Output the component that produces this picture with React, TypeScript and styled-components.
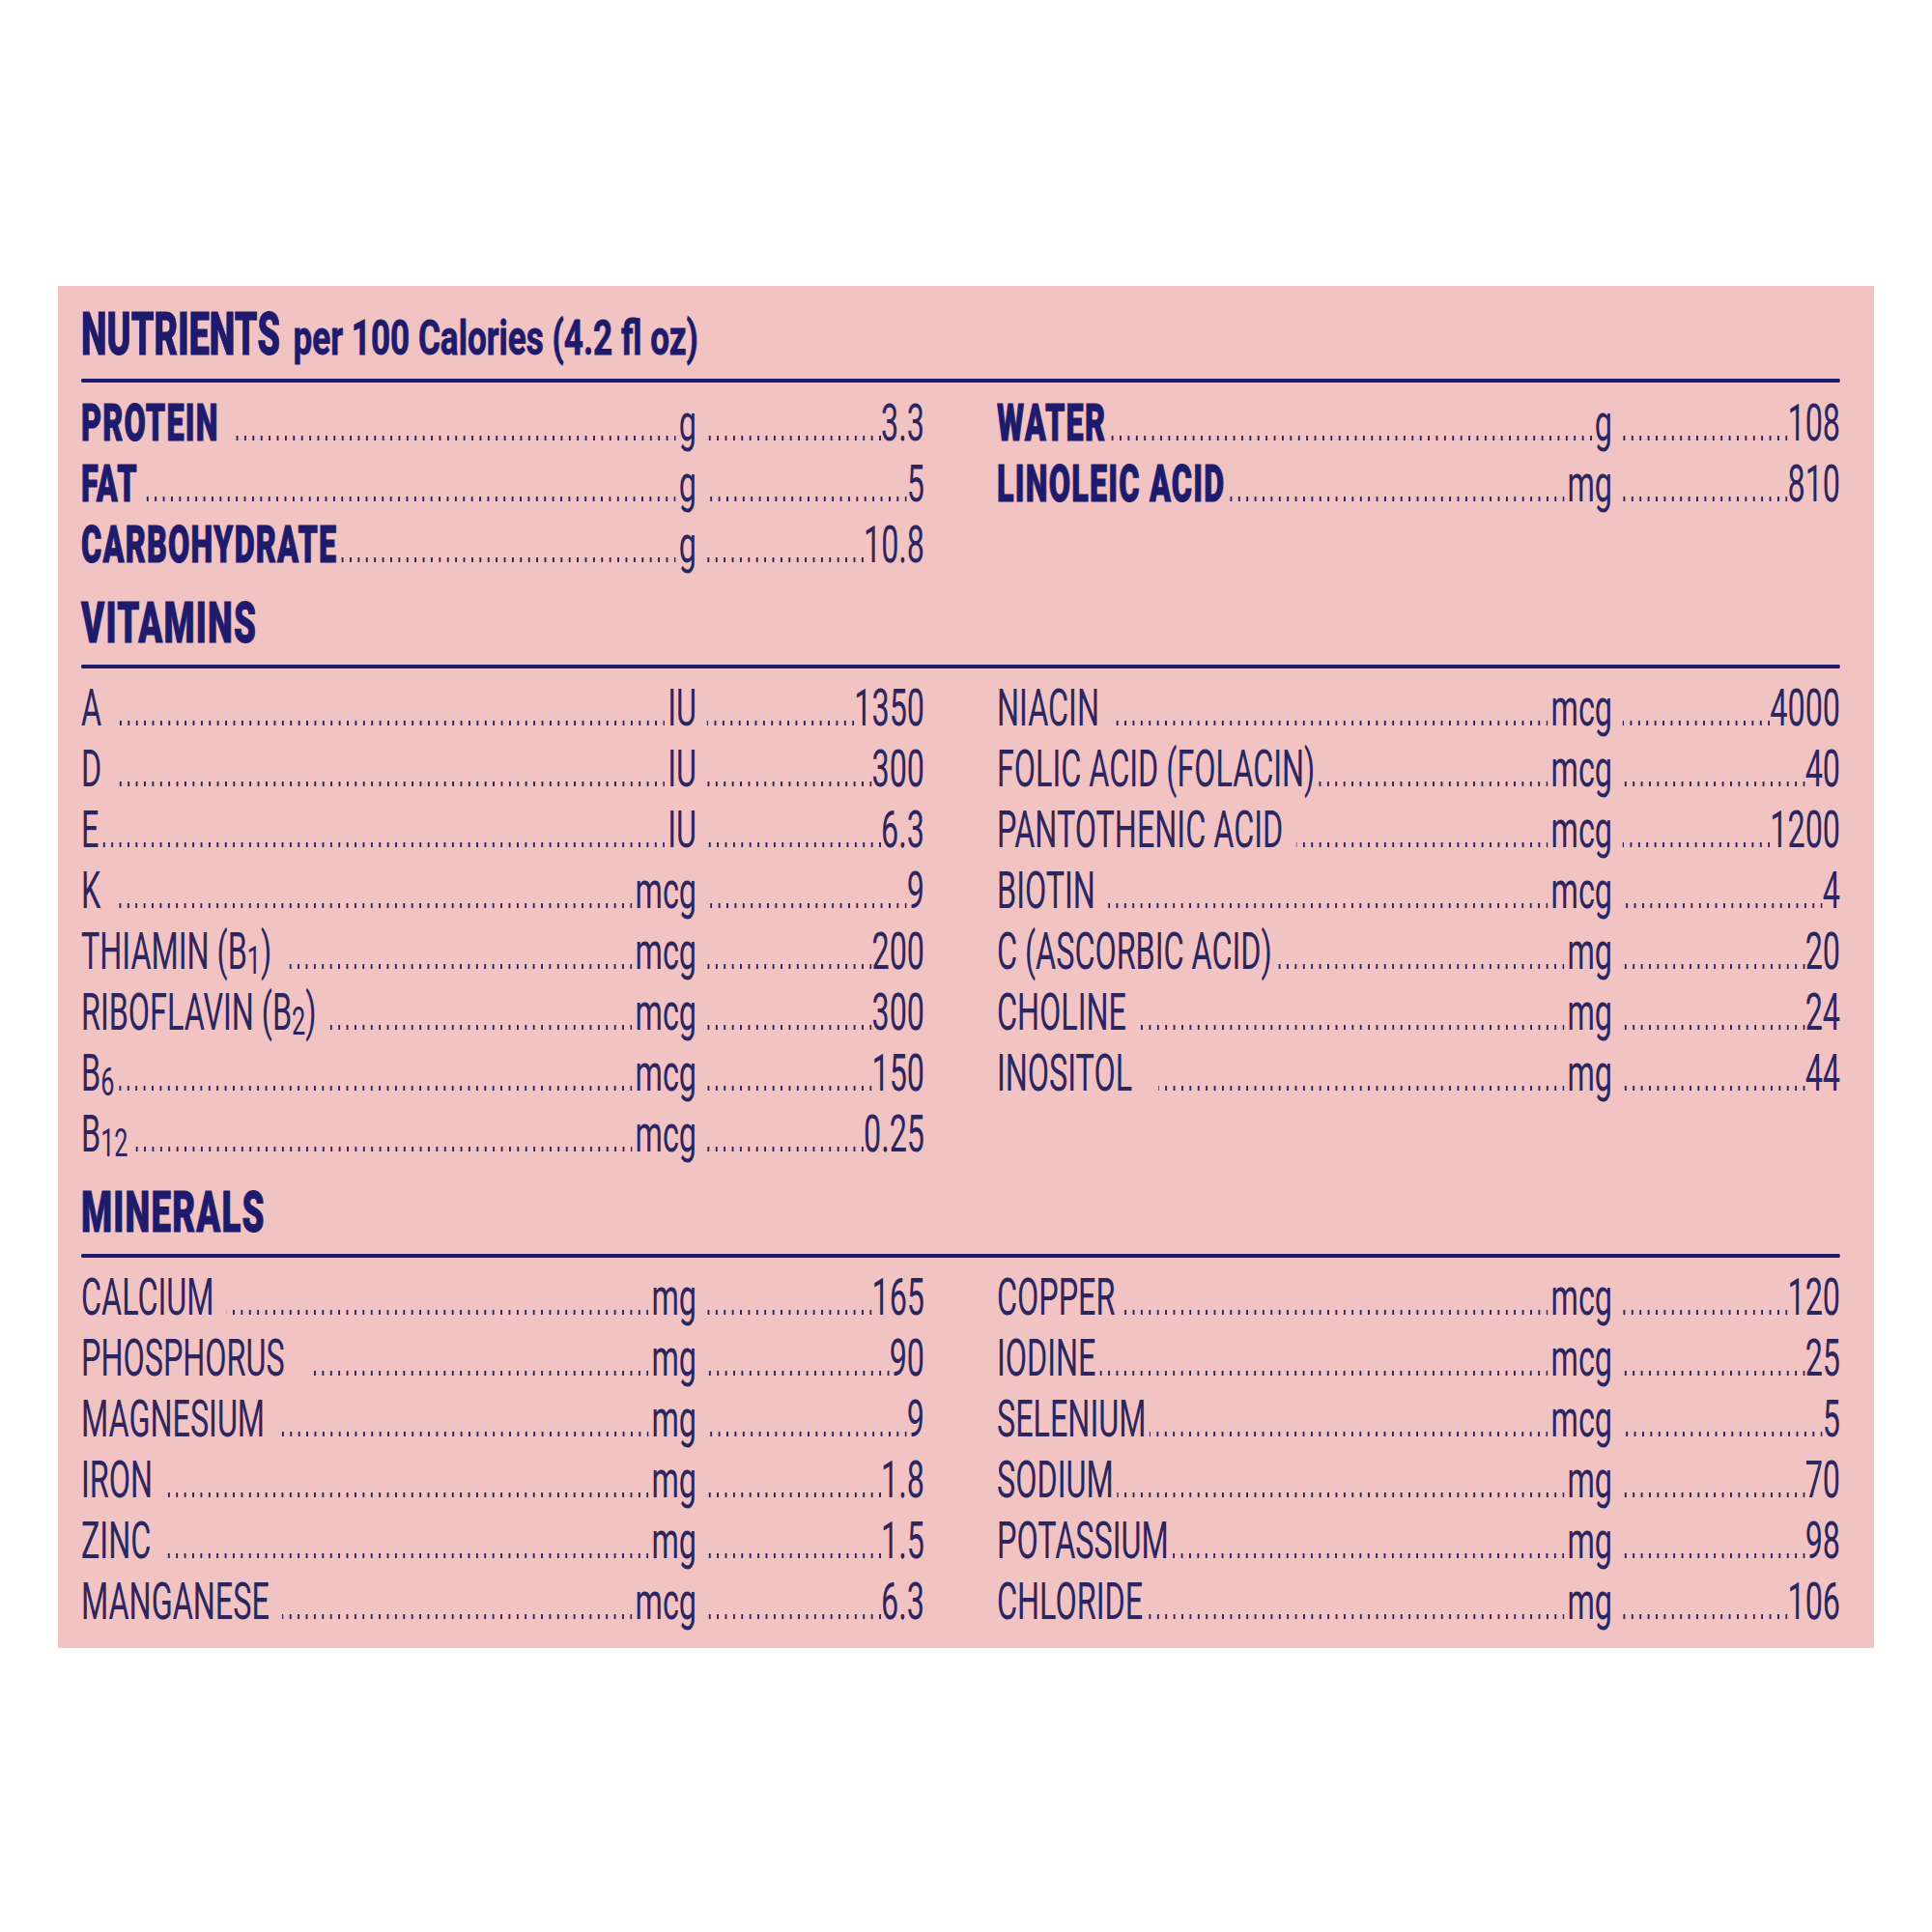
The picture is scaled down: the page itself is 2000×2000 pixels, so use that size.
import React from "react";
import styled, { createGlobalStyle } from "styled-components";

const INK = "#2c2660";
const BOLD_INK = "#1e1a6c";
const PINK = "#f2c3c3";
// the printed face is a very condensed Helvetica; squeeze Roboto to match
const SQUEEZE = 0.61;

const GlobalStyle = createGlobalStyle`
  html, body {
    margin: 0;
    padding: 0;
    background: #ffffff;
    overflow: hidden;
  }
  body {
    font-family: Roboto, "Liberation Sans", Arial, sans-serif;
  }
`;

const Page = styled.div`
  width: 2000px;
  height: 2000px;
  padding: 296px 0 0 60px;
  box-sizing: border-box;
`;

const Panel = styled.div`
  width: 1880px;
  box-sizing: border-box;
  padding: 15px 35px 16px 24px;
  background: ${PINK};
  overflow: hidden;
`;

const Squeezed = styled.div`
  width: calc(100% / ${SQUEEZE});
  transform: scaleX(${SQUEEZE});
  transform-origin: left top;
  color: ${INK};
`;

const Title = styled.h1`
  margin: 0;
  font-size: 62px;
  line-height: 70px;
  font-weight: 900;
  color: ${BOLD_INK};
  white-space: nowrap;
  -webkit-text-stroke: 0.8px ${BOLD_INK};
`;

const TitleNote = styled.span`
  display: inline-block;
  margin-left: 22px;
  font-size: 50px;
  font-weight: 700;
  transform: scaleX(1.15);
  transform-origin: left bottom;
`;

const Section = styled.section<{ $first?: boolean }>`
  margin-top: ${(p) => (p.$first ? 0 : 14)}px;
`;

const Heading = styled.h2`
  margin: 0;
  font-size: 60px;
  line-height: 70px;
  font-weight: 900;
  letter-spacing: 2px;
  color: ${BOLD_INK};
  -webkit-text-stroke: 1px ${BOLD_INK};
`;

const Rule = styled.div<{ $first?: boolean }>`
  height: 4px;
  margin: ${(p) => (p.$first ? "7px 0 11px" : "8px 0 10px")};
  background: ${BOLD_INK};
  border-radius: 2px;
`;

const Columns = styled.div`
  display: grid;
  grid-template-columns: 1fr 1fr;
  column-gap: ${75 / SQUEEZE}px;
`;

const List = styled.div`
  display: flex;
  flex-direction: column;
`;

const Row = styled.div`
  display: grid;
  grid-template-columns: ${637 / SQUEEZE}px 1fr;
  height: 63px;
  font-size: 53px;
  line-height: 63px;
  white-space: nowrap;
`;

const Lead = styled.div`
  display: flex;
`;

const Tail = styled.div`
  display: flex;
  padding-left: 18px;
`;

const Label = styled.span<{ $bold?: boolean; $gap: number }>`
  font-weight: ${(p) => (p.$bold ? 900 : 400)};
  color: ${(p) => (p.$bold ? BOLD_INK : INK)};
  letter-spacing: ${(p) => (p.$bold ? 2 : 0)}px;
  -webkit-text-stroke: ${(p) => (p.$bold ? 1 : 0)}px ${BOLD_INK};
  margin-right: ${(p) => [6, 22, 44][p.$gap]}px;
`;

const Dots = styled.span`
  flex: 1;
  min-width: 0;
  background-image: linear-gradient(to left, ${INK} 3.6px, transparent 3.6px);
  background-size: ${8.4 / SQUEEZE}px 5px;
  background-repeat: repeat-x;
  background-position: right 0 top 44px;
`;

const Unit = styled.span`
  margin-left: 5px;
`;

const Value = styled.span``;

const Sub = styled.sub`
  font-size: 0.78em;
  line-height: 0;
  vertical-align: -0.12em;
`;

type Item = {
  label: React.ReactNode;
  unit: string;
  value: string;
  gap?: number;
};

const nutrients: Item[][] = [
  [
    { label: "PROTEIN", unit: "g", value: "3.3", gap: 1 },
    { label: "FAT", unit: "g", value: "5" },
    { label: "CARBOHYDRATE", unit: "g", value: "10.8" },
  ],
  [
    { label: "WATER", unit: "g", value: "108" },
    { label: "LINOLEIC ACID", unit: "mg", value: "810" },
  ],
];

const vitamins: Item[][] = [
  [
    { label: "A", unit: "IU", value: "1350", gap: 1 },
    { label: "D", unit: "IU", value: "300", gap: 1 },
    { label: "E", unit: "IU", value: "6.3" },
    { label: "K", unit: "mcg", value: "9", gap: 1 },
    { label: <>THIAMIN (B<Sub>1</Sub>)</>, unit: "mcg", value: "200", gap: 1 },
    { label: <>RIBOFLAVIN (B<Sub>2</Sub>)</>, unit: "mcg", value: "300", gap: 1 },
    { label: <>B<Sub>6</Sub></>, unit: "mcg", value: "150" },
    { label: <>B<Sub>12</Sub></>, unit: "mcg", value: "0.25" },
  ],
  [
    { label: "NIACIN", unit: "mcg", value: "4000", gap: 1 },
    { label: "FOLIC ACID (FOLACIN)", unit: "mcg", value: "40" },
    { label: "PANTOTHENIC ACID", unit: "mcg", value: "1200", gap: 1 },
    { label: "BIOTIN", unit: "mcg", value: "4", gap: 1 },
    { label: "C (ASCORBIC ACID)", unit: "mg", value: "20" },
    { label: "CHOLINE", unit: "mg", value: "24", gap: 1 },
    { label: "INOSITOL", unit: "mg", value: "44", gap: 2 },
  ],
];

const minerals: Item[][] = [
  [
    { label: "CALCIUM", unit: "mg", value: "165", gap: 1 },
    { label: "PHOSPHORUS", unit: "mg", value: "90", gap: 2 },
    { label: "MAGNESIUM", unit: "mg", value: "9", gap: 1 },
    { label: "IRON", unit: "mg", value: "1.8", gap: 1 },
    { label: "ZINC", unit: "mg", value: "1.5", gap: 1 },
    { label: "MANGANESE", unit: "mcg", value: "6.3", gap: 1 },
  ],
  [
    { label: "COPPER", unit: "mcg", value: "120" },
    { label: "IODINE", unit: "mcg", value: "25" },
    { label: "SELENIUM", unit: "mcg", value: "5" },
    { label: "SODIUM", unit: "mg", value: "70" },
    { label: "POTASSIUM", unit: "mg", value: "98" },
    { label: "CHLORIDE", unit: "mg", value: "106" },
  ],
];

function Table({ data, bold }: { data: Item[][]; bold?: boolean }) {
  return (
    <Columns>
      {data.map((col, i) => (
        <List key={i}>
          {col.map((item, j) => (
            <Row key={j}>
              <Lead>
                <Label $bold={bold} $gap={item.gap ?? 0}>
                  {item.label}
                </Label>
                <Dots />
                <Unit>{item.unit}</Unit>
              </Lead>
              <Tail>
                <Dots />
                <Value>{item.value}</Value>
              </Tail>
            </Row>
          ))}
        </List>
      ))}
    </Columns>
  );
}

export default function App() {
  return (
    <>
      <GlobalStyle />
      <Page>
        <Panel>
          <Squeezed>
            <Section $first>
              <Title>
                NUTRIENTS<TitleNote>per 100 Calories (4.2 fl oz)</TitleNote>
              </Title>
              <Rule $first />
              <Table data={nutrients} bold />
            </Section>
            <Section>
              <Heading>VITAMINS</Heading>
              <Rule />
              <Table data={vitamins} />
            </Section>
            <Section>
              <Heading>MINERALS</Heading>
              <Rule />
              <Table data={minerals} />
            </Section>
          </Squeezed>
        </Panel>
      </Page>
    </>
  );
}
